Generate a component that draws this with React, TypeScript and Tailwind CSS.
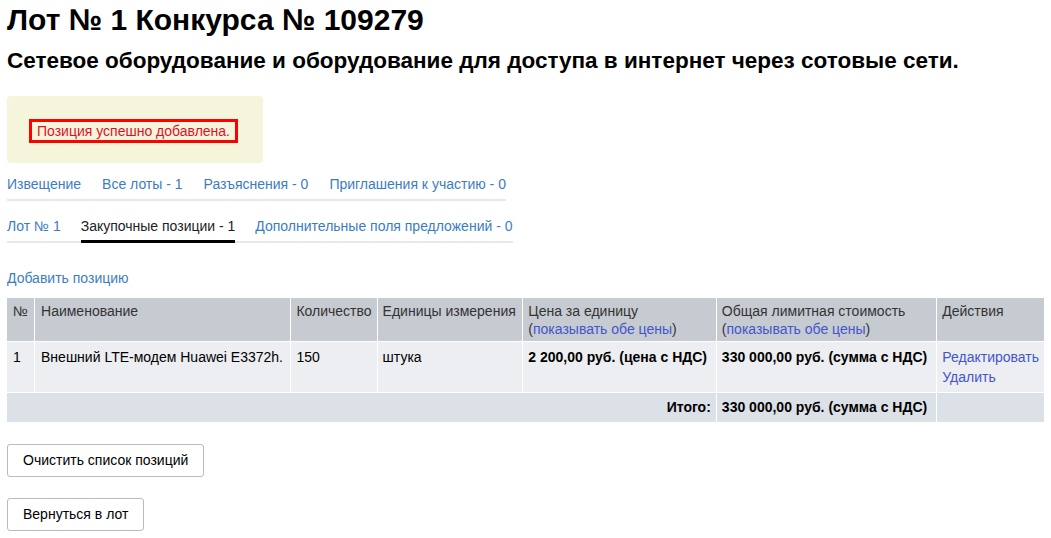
export default function App() {
  const tabs1 = ["Извещение", "Все лоты - 1", "Разъяснения - 0", "Приглашения к участию - 0"];
  return (
    <div className="min-h-screen bg-white px-[7px] font-['Liberation_Sans',Arial,sans-serif] text-[14px] text-[#333]">
      <h1 className="pt-[2px] text-[30px] font-bold leading-[36px] text-black">Лот № 1 Конкурса № 109279</h1>
      <h2 className="mt-[10px] text-[22.5px] font-bold leading-[26px] text-black">
        Сетевое оборудование и оборудование для доступа в интернет через сотовые сети.
      </h2>

      <div className="mt-[22px] w-[256px] rounded-[4px] bg-[#f5f5dc] px-[22px] pt-[23px] pb-[20px]">
        <div className="inline-block border-[3px] border-[#ff0000] px-[5px] leading-[18px] text-[#e0102b]">
          Позиция успешно добавлена.
        </div>
      </div>

      <div className="mt-[12px] inline-flex gap-[21px] border-b-2 border-[#e8e8e8] pb-[6px] leading-[18px]">
        {tabs1.map((t) => (
          <a key={t} className="text-[#3c7dc0]">
            {t}
          </a>
        ))}
      </div>

      <div>
        <div className="mt-[16px] inline-flex gap-[20px] border-b-2 border-[#e8e8e8] leading-[18px]">
          <a className="pb-[6px] text-[#3c7dc0]">Лот № 1</a>
          <span className="-mb-[2px] border-b-[3px] border-black pb-[5px] text-[#222]">Закупочные позиции - 1</span>
          <a className="pb-[6px] text-[#3c7dc0]">Дополнительные поля предложений - 0</a>
        </div>
      </div>

      <div className="mt-[26px] leading-[18px]">
        <a className="text-[#3c7dc0]">Добавить позицию</a>
      </div>

      <table className="mt-[11px] w-[1037px] border-collapse leading-[18px]">
        <thead>
          <tr className="bg-[#c6cad1] align-top text-left text-[#333]">
            <th className="h-[43px] w-[26px] border border-white border-t-0 border-l-0 px-[6px] pt-[4px] font-normal">№</th>
            <th className="w-[257px] border border-white border-t-0 px-[6px] pt-[4px] font-normal">Наименование</th>
            <th className="w-[86px] border border-white border-t-0 px-[5px] pt-[4px] font-normal">Количество</th>
            <th className="w-[146px] border border-white border-t-0 px-[5px] pt-[4px] font-normal">Единицы измерения</th>
            <th className="w-[194px] border border-white border-t-0 px-[5px] pt-[4px] font-normal">
              Цена за единицу
              <br />(<a className="text-[#4455cc]">показывать обе цены</a>)
            </th>
            <th className="w-[221px] border border-white border-t-0 px-[5px] pt-[4px] font-normal">
              Общая лимитная стоимость
              <br />(<a className="text-[#4455cc]">показывать обе цены</a>)
            </th>
            <th className="border border-white border-t-0 border-r-0 px-[5px] pt-[4px] font-normal">Действия</th>
          </tr>
        </thead>
        <tbody>
          <tr className="bg-[#eceef1] align-top text-black">
            <td className="h-[51px] border border-white border-l-0 px-[6px] pt-[6px]">1</td>
            <td className="border border-white px-[6px] pt-[6px]">Внешний LTE-модем Huawei E3372h.</td>
            <td className="border border-white px-[5px] pt-[6px]">150</td>
            <td className="border border-white px-[5px] pt-[6px]">штука</td>
            <td className="border border-white px-[5px] pt-[6px] font-bold">2 200,00 руб. (цена с НДС)</td>
            <td className="border border-white px-[5px] pt-[6px] font-bold">330 000,00 руб. (сумма с НДС)</td>
            <td className="border border-white border-r-0 px-[5px] pt-[6px]">
              <a className="block text-[#4455cc]">Редактировать</a>
              <a className="block pt-[2px] text-[#4455cc]">Удалить</a>
            </td>
          </tr>
          <tr className="bg-[#dce1e8] text-black">
            <td colSpan={5} className="h-[30px] border border-white border-l-0 border-b-0 px-[5px] text-right font-bold">
              Итого:
            </td>
            <td className="border border-white border-b-0 px-[5px] font-bold">330 000,00 руб. (сумма с НДС)</td>
            <td className="border border-white border-r-0 border-b-0"></td>
          </tr>
        </tbody>
      </table>

      <div className="mt-[22px] flex flex-col items-start gap-[21px] pb-[7px]">
        <button className="h-[33px] rounded-[3px] border border-[#bbb] bg-white px-[15px] text-black">
          Очистить список позиций
        </button>
        <button className="h-[33px] rounded-[3px] border border-[#bbb] bg-white px-[15px] text-black">
          Вернуться в лот
        </button>
      </div>
    </div>
  );
}
